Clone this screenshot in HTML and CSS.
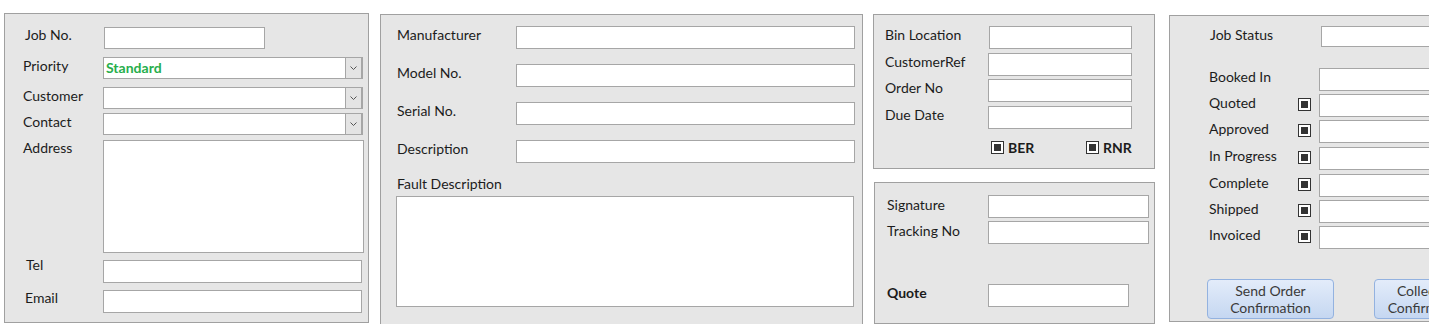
FILE: index.html
```html
<!DOCTYPE html>
<html>
<head>
<meta charset="utf-8">
<link rel="stylesheet" href="styles.css">
</head>
<body>
<div class="form">
  <section class="panel p-cust">
    <div class="row r-job"><span class="lbl l-job">Job No.</span><div class="box in-job"></div></div>
    <div class="row r-pri"><span class="lbl">Priority</span>
      <div class="combo"><span class="val green">Standard</span><span class="arrow"><svg width="7" height="4" viewBox="0 0 7 4"><path d="M0.5 0.5 L3.5 3.5 L6.5 0.5" fill="none" stroke="#555" stroke-width="1"/></svg></span></div></div>
    <div class="row r-cus"><span class="lbl">Customer</span>
      <div class="combo"><span class="val"></span><span class="arrow"><svg width="7" height="4" viewBox="0 0 7 4"><path d="M0.5 0.5 L3.5 3.5 L6.5 0.5" fill="none" stroke="#555" stroke-width="1"/></svg></span></div></div>
    <div class="row r-con"><span class="lbl">Contact</span>
      <div class="combo"><span class="val"></span><span class="arrow"><svg width="7" height="4" viewBox="0 0 7 4"><path d="M0.5 0.5 L3.5 3.5 L6.5 0.5" fill="none" stroke="#555" stroke-width="1"/></svg></span></div></div>
    <div class="row r-adr"><span class="lbl l-adr">Address</span><div class="box in-adr"></div></div>
    <div class="row r-tel"><span class="lbl l-tel">Tel</span><div class="box in-wide"></div></div>
    <div class="row r-eml"><span class="lbl l-eml">Email</span><div class="box in-wide"></div></div>
  </section>

  <section class="panel p-item">
    <div class="irow"><span class="lbl">Manufacturer</span><div class="box"></div></div>
    <div class="irow"><span class="lbl">Model No.</span><div class="box"></div></div>
    <div class="irow"><span class="lbl">Serial No.</span><div class="box"></div></div>
    <div class="irow"><span class="lbl">Description</span><div class="box"></div></div>
    <span class="lbl l-fault">Fault Description</span>
    <div class="box fault"></div>
  </section>

  <div class="col3">
    <section class="panel p-bin">
      <div class="brow"><span class="lbl">Bin Location</span><div class="box in-bin"></div></div>
      <div class="brow"><span class="lbl">CustomerRef</span><div class="box"></div></div>
      <div class="brow r-order"><span class="lbl">Order No</span><div class="box"></div></div>
      <div class="brow"><span class="lbl">Due Date</span><div class="box"></div></div>
      <div class="checks">
        <span class="citem"><span class="chk"></span><b>BER</b></span>
        <span class="citem"><span class="chk"></span><b>RNR</b></span>
      </div>
    </section>
    <section class="panel p-sig">
      <div class="srow"><span class="lbl">Signature</span><div class="box"></div></div>
      <div class="srow r-track"><span class="lbl">Tracking No</span><div class="box"></div></div>
      <div class="srow r-quote"><span class="lbl"><b>Quote</b></span><div class="box in-quote"></div></div>
    </section>
  </div>

  <section class="panel p-status">
    <div class="strow r-jobst"><span class="lbl">Job Status</span><span></span><div class="box in-jobst"></div></div>
    <div class="strow r-booked"><span class="lbl">Booked In</span><span></span><div class="box"></div></div>
    <div class="strow"><span class="lbl">Quoted</span><span class="chk"></span><div class="box"></div></div>
    <div class="strow"><span class="lbl">Approved</span><span class="chk"></span><div class="box"></div></div>
    <div class="strow nudge"><span class="lbl">In Progress</span><span class="chk"></span><div class="box"></div></div>
    <div class="strow nudge"><span class="lbl">Complete</span><span class="chk"></span><div class="box"></div></div>
    <div class="strow"><span class="lbl">Shipped</span><span class="chk"></span><div class="box"></div></div>
    <div class="strow"><span class="lbl">Invoiced</span><span class="chk"></span><div class="box"></div></div>
    <div class="buttons">
      <button class="btn">Send Order<br>Confirmation</button>
      <button class="btn btn2">Collection<br>Confirmation</button>
    </div>
  </section>
</div>
</body>
</html>
```

FILE: styles.css
```css
* { box-sizing: border-box; }
body {
  margin: 0;
  background: #fff;
  font-family: Lato, "Liberation Sans", sans-serif;
  font-size: 14px;
  line-height: 17px;
  color: #1c1c1c;
  overflow: hidden;
}
b { font-weight: 700; }
.form {
  display: flex;
  align-items: flex-start;
  padding-left: 4px;
  width: max-content;
}
.panel {
  background: #e6e6e6;
  border: 1px solid #a0a0a0;
}
.box {
  background: #fff;
  border: 1px solid #a6a6a6;
  height: 23px;
}
.lbl { margin-top: 0; white-space: nowrap; }

/* customer panel */
.p-cust {
  margin-top: 13px;
  width: 365px;
  height: 310px;
  padding: 13px 0 0 18px;
}
.row { display: flex; align-items: flex-start; }
.row .lbl { width: 80px; flex: none; }
.r-pri, .r-cus { margin-top: 8px; }
.r-con { margin-top: 4px; }
.r-adr { margin-top: 5px; }
.r-tel, .r-eml { margin-top: 7px; }
.l-job { padding-left: 2px; margin-top: -1px; }
.l-adr { margin-top: -1px; }
.l-tel { margin-top: -4px; padding-left: 3px; }
.l-eml { margin-top: -1px; padding-left: 2px; }
.in-job { width: 161px; height: 22px; margin-left: 1px; }
.in-adr { width: 261px; height: 113px; }
.in-wide { width: 259px; }
.combo {
  display: flex;
  width: 260px;
  height: 22px;
  background: #fff;
  border: 1px solid #a6a6a6;
}
.combo .val { flex: 1; padding: 1px 0 0 2px; }
.green { color: #27ae4c; font-weight: 700; }
.combo .arrow {
  width: 17px;
  background: #e4e4e4;
  border-left: 1px solid #a6a6a6;
  border-right: 1px solid #a6a6a6;
  display: flex;
  align-items: center;
  justify-content: center;
}
.combo .arrow svg { display: block; }

/* item panel */
.p-item {
  margin: 14px 0 0 11px;
  width: 483px;
  height: 312px;
  padding: 11px 0 0 15px;
  display: flex;
  flex-direction: column;
}
.irow {
  display: grid;
  grid-template-columns: 120px 339px;
  margin-bottom: 15px;
}
.irow .lbl { padding-left: 1px; }
.irow:nth-child(4) { margin-bottom: 12px; }
.l-fault { padding-left: 1px; margin-top: 0; }
.fault { width: 458px; height: 111px; margin-top: 4px; }

/* column 3 */
.col3 {
  margin: 14px 0 0 10px;
  width: 282px;
  display: flex;
  flex-direction: column;
}
.p-bin {
  height: 155px;
  padding: 11px 0 0 11px;
}
.brow {
  display: grid;
  grid-template-columns: 103px 144px;
  margin-bottom: 4px;
}
.r-order { margin-top: -1px; }
.in-bin { margin-left: 1px; }
.checks {
  display: flex;
  margin: 10px 0 0 106px;
}
.citem {
  display: flex;
  align-items: center;
  gap: 4px;
  width: 95px;
  flex: none;
}
.chk {
  width: 13px;
  height: 13px;
  border: 1px solid #333;
  background: #fff;
  padding: 2px;
  flex: none;
}
.chk::after {
  content: "";
  display: block;
  width: 7px;
  height: 7px;
  background: #333;
}
.p-sig {
  margin: 13px 0 0 1px;
  width: 281px;
  height: 142px;
  padding: 12px 0 0 12px;
}
.srow {
  display: grid;
  grid-template-columns: 101px 161px;
}
.srow .lbl { margin-top: 1px; }
.r-track { margin-top: 3px; }
.r-quote { margin-top: 40px; grid-template-columns: 101px 141px; }
.r-quote .lbl { margin-top: 0; }

/* status panel */
.p-status {
  margin: 15px 0 0 14px;
  width: 420px;
  height: 307px;
  padding: 10px 0 0 39px;
}
.strow {
  display: grid;
  grid-template-columns: 89px 21px 200px;
  align-items: start;
  margin-top: 3px;
}
.strow .lbl { margin-top: 0; }
.strow .chk { margin-top: 4px; }
.r-jobst { margin: 0 0 0 1px; }
.r-jobst .lbl { margin-top: 0; }
.in-jobst { height: 21px; margin-left: 1px; }
.r-booked { margin-top: 21px; }
.nudge { margin-top: 4px; }
.buttons {
  display: flex;
  gap: 40px;
  margin: 30px 0 0 -2px;
}
.btn {
  width: 127px;
  height: 40px;
  flex: none;
  border: 1px solid #93b2e0;
  border-radius: 4px;
  background: linear-gradient(#e3ecfa, #c5d7f1);
  color: #3a3a3a;
  font: inherit;
  line-height: 17px;
  text-align: center;
  padding: 0;
}
.btn2 { width: 108px; }
```
